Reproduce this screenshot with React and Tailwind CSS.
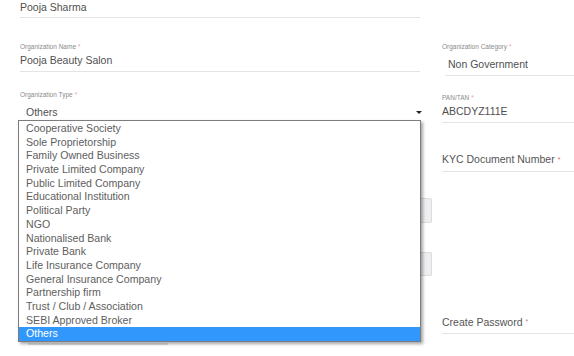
import React from "react";

const options = [
  "Cooperative Society",
  "Sole Proprietorship",
  "Family Owned Business",
  "Private Limited Company",
  "Public Limited Company",
  "Educational Institution",
  "Political Party",
  "NGO",
  "Nationalised Bank",
  "Private Bank",
  "Life Insurance Company",
  "General Insurance Company",
  "Partnership firm",
  "Trust / Club / Association",
  "SEBI Approved Broker",
  "Others",
];

function Label({ children }) {
  return (
    <div className="h-[9px] flex items-center text-[6.5px] leading-[9px] text-[#8a8a8a]">
      {children}
      <span className="ml-[2px] text-[#f0a0a0]">*</span>
    </div>
  );
}

export default function App() {
  return (
    <div
      className="relative flex h-[356px] w-[574px] overflow-hidden bg-white text-[#505050]"
      style={{ fontFamily: '"Liberation Sans", Arial, sans-serif' }}
    >
      {/* Left column */}
      <div className="ml-[20px] flex w-[400px] flex-col">
        <div className="flex h-[18px] items-center border-b border-[#e4e4e4] pb-[2px] text-[10.5px]">
          Pooja Sharma
        </div>

        <div className="mt-[24px]">
          <Label>Organization Name</Label>
        </div>
        <div className="flex h-[21px] items-center border-b border-[#e4e4e4] text-[10.5px]">
          Pooja Beauty Salon
        </div>

        <div className="mt-[18px]">
          <Label>Organization Type</Label>
        </div>
        <div className="relative flex h-[21px] items-center pl-[6px] pt-[6px] text-[10.5px]">
          <span>Others</span>
          <span className="ml-auto mr-[-2px] h-0 w-0 border-x-[3px] border-t-[3px] border-x-transparent border-t-[#222]" />
          <div className="absolute left-[-2px] top-full z-10 w-[403px] border border-[#7d7d7d] bg-white pt-[1px] shadow-[2px_2px_3px_rgba(0,0,0,0.35)]">
            {options.map((o, i) => (
              <div
                key={o}
                className={
                  i === options.length - 1
                    ? "h-[13.7px] bg-[#3297fd] pl-[7px] text-[10.6px] leading-[13.7px] text-white"
                    : "h-[13.7px] pl-[7px] text-[10.6px] leading-[13.7px] text-[#5e5e5e]"
                }
              >
                {o}
              </div>
            ))}
          </div>
        </div>

        <div className="mr-[-12px] mt-[78px] h-[25px] w-[30px] self-end rounded-[2px] border border-[#dcdcdc] bg-[#efeff1]" />
        <div className="mr-[-12px] mt-[29px] h-[24px] w-[30px] self-end rounded-[2px] border border-[#dcdcdc] bg-[#efeff1]" />
        <div className="ml-[8px] mt-[67px] h-[2px] w-[140px] bg-[#e2e2e2]" />
      </div>

      {/* Right column */}
      <div className="ml-[22px] flex flex-1 flex-col">
        <div className="mt-[42px]">
          <Label>Organization Category</Label>
        </div>
        <div className="ml-[3px] flex h-[25px] items-center border-b border-[#e4e4e4] pl-[3px] pt-[3px] text-[10.5px]">
          Non Government
        </div>

        <div className="mt-[17px]">
          <Label>PAN/TAN</Label>
        </div>
        <div className="flex h-[21px] items-center border-b border-[#e4e4e4] text-[10.5px]">
          ABCDYZ111E
        </div>

        <div className="mt-[26px] flex h-[23px] items-center border-b border-[#e4e4e4] text-[10.5px] text-[#555]">
          KYC Document Number
          <span className="ml-[3px] text-[7px] text-[#e06a6a]">*</span>
        </div>

        <div className="mt-[140px] flex h-[22px] items-center border-b border-[#e4e4e4] text-[10.5px] text-[#555]">
          Create Password
          <span className="ml-[3px] text-[7px] text-[#c08888]">*</span>
        </div>
      </div>
    </div>
  );
}
